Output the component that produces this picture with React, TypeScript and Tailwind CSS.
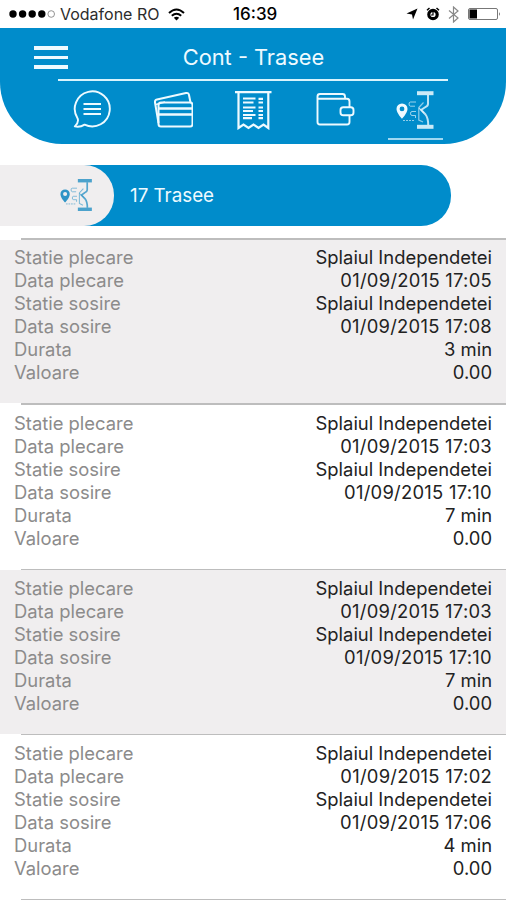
import React from 'react';

interface Route {
  from: string;
  departure: string;
  to: string;
  arrival: string;
  duration: string;
  value: string;
}

const ROUTES: Route[] = [
  { from: 'Splaiul Independetei', departure: '01/09/2015 17:05', to: 'Splaiul Independetei', arrival: '01/09/2015 17:08', duration: '3 min', value: '0.00' },
  { from: 'Splaiul Independetei', departure: '01/09/2015 17:03', to: 'Splaiul Independetei', arrival: '01/09/2015 17:10', duration: '7 min', value: '0.00' },
  { from: 'Splaiul Independetei', departure: '01/09/2015 17:03', to: 'Splaiul Independetei', arrival: '01/09/2015 17:10', duration: '7 min', value: '0.00' },
  { from: 'Splaiul Independetei', departure: '01/09/2015 17:02', to: 'Splaiul Independetei', arrival: '01/09/2015 17:06', duration: '4 min', value: '0.00' },
];

const ChatIcon = () => (
  <svg className="w-10 h-10" viewBox="0 0 40 40" fill="none" stroke="currentColor" strokeWidth="1.9" strokeLinejoin="round">
    <path d="M5.6 28.4A17.500 17.500 0 1 1 12.600 34.600C9.500 36.600 6.500 37.300 2.800 36.400C5 34.500 6.600 31.200 5.600 28.400Z" />
    <path d="M11.500 14H29M11.500 19H29M11.500 24H29" strokeWidth="2" />
  </svg>
);

const CardsIcon = () => (
  <svg className="w-10 h-10" viewBox="0 0 40 40" fill="none" stroke="currentColor" strokeWidth="2" strokeLinejoin="round">
    <rect x="5.5" y="12.5" width="34" height="24" rx="2.5" />
    <path d="M5.5 18.5H39.5M5.5 24.5H39.5" strokeWidth="2.4" />
    <path d="M5.5 33L2 12.5Q1.6 10 4 9.4L33 3Q35.5 2.5 36 5L37.5 12.5" />
    <path d="M3 14.5L12 12" strokeWidth="1.6" />
  </svg>
);

const ReceiptIcon = () => (
  <svg className="w-10 h-10" viewBox="0 0 40 40" fill="none" stroke="currentColor">
    <path d="M1 2.2H37.500" strokeWidth="2.2" />
    <path d="M4.500 3V38L9.500 34.500L14.500 38L19.500 34.500L24.500 38L29.500 34.500L34.300 38V3" strokeWidth="2.2" />
    <path d="M9 8.5H21.5M9 12.5H19.5M9 17.5H21.5M9 21H19M9 25H21.5M9 28.2H18" strokeWidth="2.2" />
    <path d="M24.5 8.8H29M24.5 12.5H29M24.5 17.5H29M24.5 21H29M24.5 25H29M24.5 28.2H29" strokeWidth="2.2" />
  </svg>
);

const WalletIcon = () => (
  <svg className="w-10 h-10" viewBox="0 0 40 40" fill="none" stroke="currentColor" strokeWidth="1.9" strokeLinejoin="round">
    <path d="M30 8.500V6.500Q30 4 27.500 4H5Q2.500 4 2.500 6.500V32Q2.500 34.500 5 34.500H32Q34.500 34.500 34.500 32V26" />
    <path d="M3 8.8H32Q34.500 8.8 34.500 11.5V17" />
    <rect x="25.5" y="17.2" width="13" height="8" rx="2.8" />
  </svg>
);

// map pin, dotted trail and handlebar
const RouteIcon = ({ className }: { className: string }) => (
  <svg className={className} viewBox="0 0 40 40" fill="none" stroke="currentColor">
    <path fillRule="evenodd" fill="currentColor" stroke="none" d="M6 13.4A5.5 5.5 0 0 0 .5 19C.5 23 6 28.8 6 28.8S11.5 23 11.5 19A5.5 5.5 0 0 0 6 13.4ZM6 16.5A2.4 2.4 0 1 1 6 21.3A2.4 2.4 0 0 1 6 16.5Z" />
    <path d="M20 12H14.5Q13 12 13 14T14.5 16.2H19" strokeWidth="1" opacity=".65" />
    <path d="M20 21.5H16Q14.5 21.5 14.5 23.5T16 25.5H19.5V28" strokeWidth="1" opacity=".65" />
    <path d="M7 30.5H19" strokeWidth="1.1" strokeDasharray="2 1" opacity=".6" />
    <path d="M21 3.2H37.5" strokeWidth="4" opacity=".85" />
    <path d="M21 36.8H37.5" strokeWidth="4" opacity=".85" />
    <path d="M32 5V14Q32 16 29 17.3L25.2 20L29.5 24.5Q32.2 28 32.2 35" strokeWidth="2" opacity=".8" />
    <path d="M27.5 12.5L22.8 17.5V30L27 32" strokeWidth="1.2" opacity=".6" />
    <path d="M23 18L28 23" strokeWidth="1.1" opacity=".7" />
  </svg>
);

const StatusBar = () => (
  <div className="grid grid-cols-[232px_1fr_auto] items-center h-7 pl-[9px] pr-[5px] text-black">
    <div className="flex items-center">
      <svg className="w-[47px] h-2" viewBox="0 0 47 8" fill="currentColor">
        <circle cx="4" cy="4" r="3.7" />
        <circle cx="13.6" cy="4" r="3.7" />
        <circle cx="23.2" cy="4" r="3.7" />
        <circle cx="32.8" cy="4" r="3.7" />
        <circle cx="42.2" cy="4" r="3.3" fill="none" stroke="#777" strokeWidth=".8" />
      </svg>
      <span className="ml-1 w-[100px] text-[16px] leading-7 whitespace-nowrap text-[#2c2c2c]">Vodafone RO</span>
      <svg className="ml-2 w-[17px] h-[13px]" viewBox="0 0 17 13" fill="none" stroke="currentColor" strokeWidth="2">
        <path d="M1 5Q8.5 -2 16 5" />
        <path d="M3.8 7.8Q8.5 3.6 13.2 7.8" />
        <path d="M8.5 12.5L5.8 9.7Q8.5 7.8 11.2 9.7Z" fill="currentColor" stroke="none" />
      </svg>
    </div>
    <span className="-ml-2 text-[17px] leading-7 font-medium">16:39</span>
    <div className="flex items-center">
      <svg className="w-3 h-3" viewBox="0 0 12 12" fill="currentColor">
        <path d="M11.5 .5L7 11.5L6 6.5L.5 5.5Z" />
      </svg>
      <svg className="ml-[8px] w-[14px] h-[14px]" viewBox="0 0 14 14" fill="none" stroke="currentColor">
        <circle cx="7" cy="7.5" r="4.2" strokeWidth="3.2" />
        <path d="M7 5V8H5" strokeWidth="1.2" />
        <path d="M1 3.2L3.5 1M13 3.2L10.5 1" strokeWidth="1.5" />
      </svg>
      <svg className="ml-[8px] w-[11px] h-[17px]" viewBox="0 0 11 17" fill="none" stroke="#888" strokeWidth="1.2">
        <path d="M1 4.500L10 12L5.500 16V1L10 5L1 12.500" />
      </svg>
      <svg className="ml-[9px] w-[33px] h-3" viewBox="0 0 33 12" fill="none">
        <rect x=".5" y=".5" width="29" height="11" rx="1.5" stroke="#777" />
        <rect x="1.5" y="1.5" width="7.5" height="9" fill="#000" />
        <path d="M31 4Q32.8 6 31 8Z" fill="#555" />
      </svg>
    </div>
  </div>
);

const Header = () => (
  <header className="h-[116px] rounded-b-[62px] bg-[#008ccb] text-[#eefaff]">
    <div className="grid grid-cols-[34px_1fr_34px] items-center h-[51px] px-[34px] pt-[8px]">
      <div className="flex flex-col gap-[6px]">
        <span className="h-[3.5px] bg-[#eefaff]" />
        <span className="h-[3.5px] bg-[#eefaff]" />
        <span className="h-[3.5px] bg-[#eefaff]" />
      </div>
      <h1 className="pl-px text-center text-[21.8px] leading-[26px] -mt-px">Cont - Trasee</h1>
    </div>
    <div className="mx-[58px] h-[2px] bg-[#d9f4fd]" />
    <nav className="grid grid-cols-5 w-[405px] ml-[51px] pt-[9px] justify-items-center">
      <ChatIcon />
      <CardsIcon />
      <ReceiptIcon />
      <WalletIcon />
      <div className="flex flex-col items-center">
        <RouteIcon className="w-10 h-10" />
        <span className="mt-[8px] w-[55px] h-[2px] bg-[#9ed8f2]" />
      </div>
    </nav>
  </header>
);

interface RowProps {
  label: string;
  value: string;
  isDate?: boolean;
}

const Row = ({ label, value, isDate = false }: RowProps) => (
  <div className="flex justify-between h-[23px] text-[18.4px] leading-[23px]">
    <span className="text-[#8c8b8b]">{label}</span>
    <span className={isDate ? 'text-[#222] tracking-[0.27px]' : 'text-[#222]'}>{value}</span>
  </div>
);

const RouteCard = ({ route }: { route: Route }) => (
  <li className="group h-[165.3px]">
    <div className="ml-[21px] h-[1.5px] bg-[#bdbdbd]" />
    <div className="h-[163.8px] pl-[14px] pr-[14px] pt-[6.8px] group-odd:bg-[#f0eeef]">
      <Row label="Statie plecare" value={route.from} />
      <Row label="Data plecare" value={route.departure} isDate />
      <Row label="Statie sosire" value={route.to} />
      <Row label="Data sosire" value={route.arrival} isDate />
      <Row label="Durata" value={route.duration} />
      <Row label="Valoare" value={route.value} />
    </div>
  </li>
);

export default function App() {
  return (
    <div className="w-[506px] h-[900px] overflow-hidden bg-white font-['Inter','Liberation_Sans',sans-serif]">
      <StatusBar />
      <Header />
      <div className="flex w-[451px] h-[60.5px] mt-[21px] rounded-r-[30px] bg-[#008ccb] items-center">
        <div className="flex items-center w-[114px] h-full pl-[60px] rounded-r-[30px] bg-[#f0eeef] text-[#2f94c6]">
          <RouteIcon className="w-[34px] h-[34px]" />
        </div>
        <span className="ml-[16px] pt-px text-[18.8px] text-[#eefaff]">17 Trasee</span>
      </div>
      <ul className="mt-[12.5px]">
        {ROUTES.map((route, i) => (
          <RouteCard key={i} route={route} />
        ))}
      </ul>
      <div className="ml-[21px] h-[1.5px] bg-[#bdbdbd]" />
    </div>
  );
}
